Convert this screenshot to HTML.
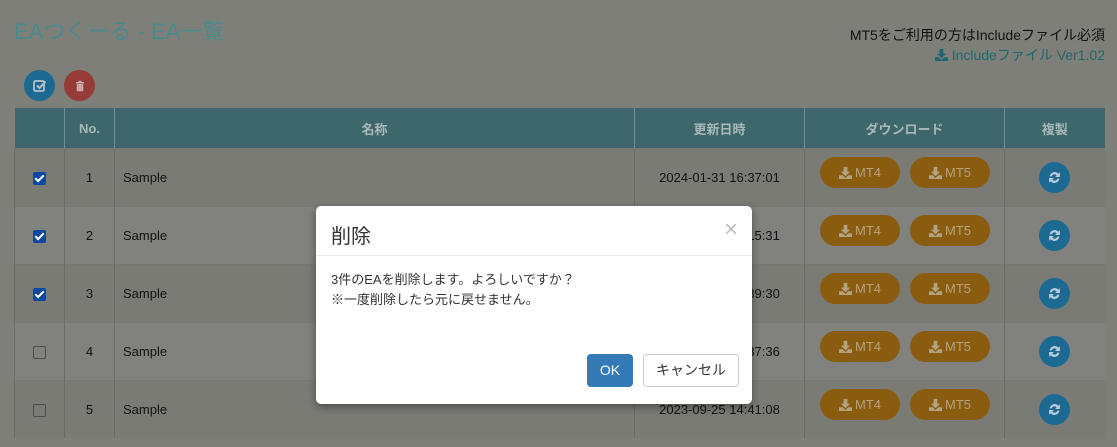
<!DOCTYPE html><html><head><meta charset="utf-8"><style>
body{margin:0;width:1117px;height:447px;background:#7f7f7a;font-family:"Liberation Sans","Noto Sans CJK JP",sans-serif;overflow:hidden;position:relative;color:#111}
.t{position:absolute;left:14px;top:14px;font-size:22px;color:#4a8a8d}
.r1{position:absolute;right:12px;top:25px;font-size:14px;color:#111}
.r2{position:absolute;right:12px;top:45px;font-size:14px;color:#1d6870}
.c{position:absolute;width:31px;height:31px;border-radius:50%;top:70px;display:flex;align-items:center;justify-content:center}
table{position:absolute;left:14px;top:108px;border-collapse:collapse;width:1090px;font-size:13px;table-layout:fixed}
th{background:#3d676b;color:#a9b8b8;height:40px;padding:0;font-weight:bold;border-left:1px solid #6f8f92;font-size:13px}
td{height:57px;padding:0;border-left:1px solid #6b6b68;border-top:1px solid #787873;background:#81817d;text-align:center;position:relative}
tr:nth-child(even) td{background:#7b7b76}
.cb{display:inline-block;width:11px;height:11px;border:1.5px solid #4d4d4d;border-radius:2px;vertical-align:middle}
.cb.on{background:#0d47a1;border-color:#0d47a1;position:relative}
.cb.on::after{content:"";position:absolute;left:3px;top:0px;width:3px;height:7px;border:solid #fff;border-width:0 2px 2px 0;transform:rotate(45deg)}
.dl{position:absolute;top:8px;left:0;width:200px;text-align:center}
.o{display:inline-flex;align-items:center;justify-content:center;gap:3px;width:80px;height:31px;border-radius:16px;background:#8a5c10;color:#b3a27f;margin:0 5px;font-size:13px}
.rf{display:inline-flex;align-items:center;justify-content:center;width:31px;height:31px;border-radius:50%;background:#1c6a92;vertical-align:middle}
.m{position:absolute;left:316px;top:206px;width:436px;height:198px;background:#fff;border-radius:5px;box-shadow:0 3px 9px rgba(0,0,0,.4)}
.mh{height:49px;border-bottom:1px solid #e5e5e5;position:relative}
.mh span{position:absolute;left:15px;top:14px;font-size:20px;color:#333}
.x{position:absolute;right:14px;top:10px;font-size:24px;color:#c0c0c0}
.mb{padding:14px 15px;font-size:13px;line-height:20px;color:#333}
.ok{position:absolute;left:271px;top:148px;width:46px;height:33px;background:#337ab7;border-radius:4px;color:#fff;font-size:14px;text-align:center;line-height:33px}
.cn{position:absolute;left:327px;top:148px;width:94px;height:31px;border:1px solid #ccc;border-radius:4px;color:#333;font-size:14px;text-align:center;line-height:31px}
</style></head><body>
<svg width="0" height="0" style="position:absolute"><defs>
<symbol id="d" viewBox="0 0 14 14"><path d="M5 1h4v5h3l-5 5-5-5h3z M0 10h4l3 3 3-3h4v4H0z" fill="currentColor"/></symbol>
<symbol id="r" viewBox="0 0 14 14"><path d="M2.5 6A4.6 4.6 0 0 1 10.5 3.5L12 2v4.5H7.5l1.6-1.6A2.8 2.8 0 0 0 4.4 6z M11.5 8A4.6 4.6 0 0 1 3.5 10.5L2 12V7.5h4.5L4.9 9.1A2.8 2.8 0 0 0 9.6 8z" fill="currentColor"/></symbol>
</defs></svg>
<div class="t">EAつくーる - EA一覧</div>
<div class="r1">MT5をご利用の方はIncludeファイル必須</div>
<div class="r2"><svg width="13" height="13" style="color:#1d6870;vertical-align:-1px"><use href="#d"/></svg> Includeファイル Ver1.02</div>
<div class="c" style="left:24px;background:#1c6a92"><svg width="16" height="16" viewBox="0 0 16 16"><rect x="2" y="3" width="10" height="10" rx="1.5" fill="none" stroke="#b5c2c8" stroke-width="1.8"/><path d="M5 7.5l2.5 2.5 6-6.5" fill="none" stroke="#b5c2c8" stroke-width="2"/></svg></div>
<div class="c" style="left:64px;background:#963b38"><svg width="12" height="12" viewBox="0 0 12 12"><path d="M2 2h8v1.5H2z M4.5 0.8h3v1.2h-3z M2.8 4h6.4v7.2H2.8z" fill="#c8a8a6"/></svg></div>
<table>
<colgroup><col style="width:50px"><col style="width:50px"><col style="width:520px"><col style="width:170px"><col style="width:200px"><col style="width:100px"></colgroup>
<tr><th style="border-left:none"></th><th>No.</th><th>名称</th><th>更新日時</th><th>ダウンロード</th><th>複製</th></tr>
<tr><td><span class="cb on"></span></td><td>1</td><td style="text-align:left;padding-left:8px">Sample</td><td>2024-01-31 16:37:01</td><td><div class="dl"><span class="o"><svg width="13" height="13"><use href="#d"/></svg>MT4</span><span class="o"><svg width="13" height="13"><use href="#d"/></svg>MT5</span></div></td><td><span class="rf"><svg width="15" height="15" style="color:#bcd"><use href="#r"/></svg></span></td></tr>
<tr><td><span class="cb on"></span></td><td>2</td><td style="text-align:left;padding-left:8px">Sample</td><td>2024-01-31 16:15:31</td><td><div class="dl"><span class="o"><svg width="13" height="13"><use href="#d"/></svg>MT4</span><span class="o"><svg width="13" height="13"><use href="#d"/></svg>MT5</span></div></td><td><span class="rf"><svg width="15" height="15" style="color:#bcd"><use href="#r"/></svg></span></td></tr>
<tr><td><span class="cb on"></span></td><td>3</td><td style="text-align:left;padding-left:8px">Sample</td><td>2024-01-31 15:39:30</td><td><div class="dl"><span class="o"><svg width="13" height="13"><use href="#d"/></svg>MT4</span><span class="o"><svg width="13" height="13"><use href="#d"/></svg>MT5</span></div></td><td><span class="rf"><svg width="15" height="15" style="color:#bcd"><use href="#r"/></svg></span></td></tr>
<tr><td><span class="cb"></span></td><td>4</td><td style="text-align:left;padding-left:8px">Sample</td><td>2023-09-25 14:37:36</td><td><div class="dl"><span class="o"><svg width="13" height="13"><use href="#d"/></svg>MT4</span><span class="o"><svg width="13" height="13"><use href="#d"/></svg>MT5</span></div></td><td><span class="rf"><svg width="15" height="15" style="color:#bcd"><use href="#r"/></svg></span></td></tr>
<tr><td><span class="cb"></span></td><td>5</td><td style="text-align:left;padding-left:8px">Sample</td><td>2023-09-25 14:41:08</td><td><div class="dl"><span class="o"><svg width="13" height="13"><use href="#d"/></svg>MT4</span><span class="o"><svg width="13" height="13"><use href="#d"/></svg>MT5</span></div></td><td><span class="rf"><svg width="15" height="15" style="color:#bcd"><use href="#r"/></svg></span></td></tr>
</table>
<div class="m"><div class="mh"><span>削除</span><div class="x">×</div></div>
<div class="mb">3件のEAを削除します。よろしいですか？<br>※一度削除したら元に戻せません。</div>
<div class="ok">OK</div><div class="cn">キャンセル</div></div>
</body></html>
